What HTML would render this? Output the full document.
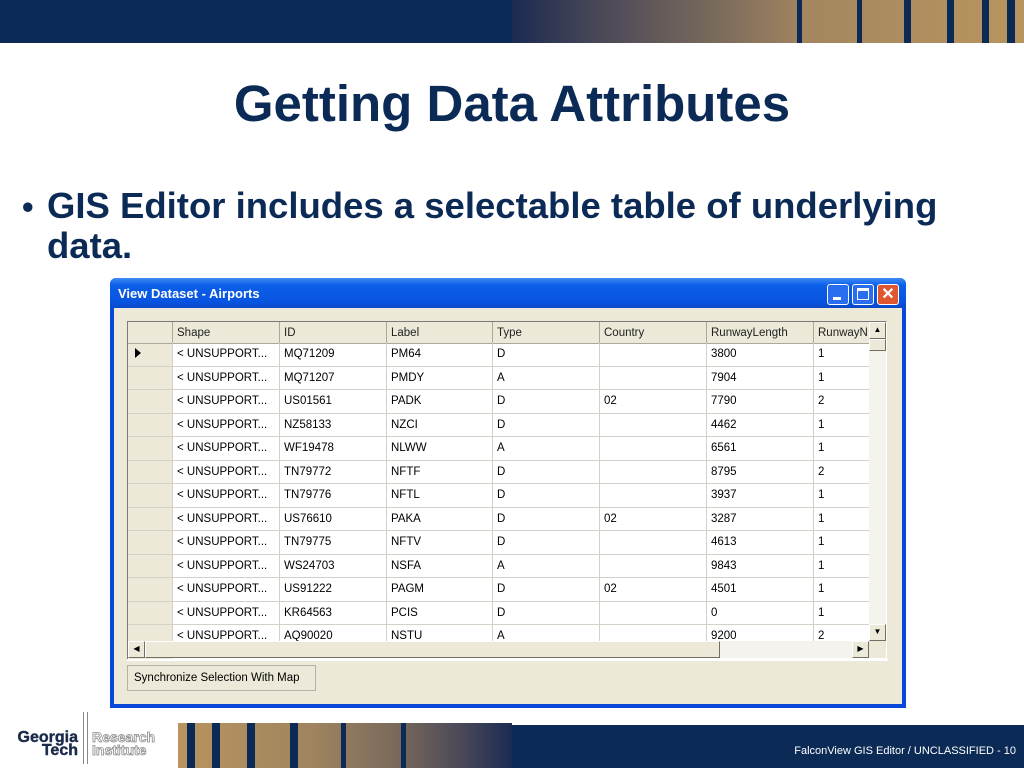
<!DOCTYPE html>
<html><head><meta charset="utf-8"><style>
*{margin:0;padding:0;box-sizing:border-box}
body{width:1024px;height:768px;position:relative;overflow:hidden;background:#fff;font-family:"Liberation Sans",Arial,sans-serif}
.a{position:absolute}
.s{position:absolute;background:#0b2a55}
.cell{position:absolute;font-size:11.5px;color:#000;white-space:nowrap;overflow:hidden;line-height:23px;padding-left:4px}
</style></head><body>
<div class="a" style="left:0;top:0;width:512px;height:43px;background:#0b2a55"></div>
<div class="a" style="left:512px;top:0;width:290px;height:43px;background:linear-gradient(90deg,#1b2b52,#4a4858 30%,#7a6a5c 70%,#a0845f)"></div>
<div class="a" style="left:797px;top:0;width:227px;height:43px;background:linear-gradient(90deg,#a3865f,#b8955f)"></div>
<div class="s" style="left:797px;top:0;width:5px;height:43px"></div>
<div class="s" style="left:857px;top:0;width:5px;height:43px"></div>
<div class="s" style="left:904px;top:0;width:7px;height:43px"></div>
<div class="s" style="left:947px;top:0;width:7px;height:43px"></div>
<div class="s" style="left:982px;top:0;width:7px;height:43px"></div>
<div class="s" style="left:1007px;top:0;width:8px;height:43px"></div>

<div class="a" style="left:0;top:74px;width:1024px;text-align:center;font-size:51px;font-weight:bold;color:#0b2a55;line-height:60px">Getting Data Attributes</div>
<div class="a" style="left:22px;top:187px;font-size:33px;font-weight:bold;color:#0b2a55;line-height:40px">•</div>
<div class="a" style="left:47px;top:186px;width:975px;font-size:36.5px;font-weight:bold;color:#0b2a55;line-height:40px">GIS Editor includes a selectable table of underlying<br>data.</div>

<div class="a" style="left:110px;top:278px;width:796px;height:430px;background:#0a46d8;border-radius:6px 6px 0 0"></div>
<div class="a" style="left:110px;top:278px;width:796px;height:30px;border-radius:6px 6px 0 0;background:linear-gradient(180deg,#3d8cf5,#0b5ee8 25%,#0854e0 80%,#0a48c8)"></div>
<div class="a" style="left:118px;top:286px;font-size:13px;font-weight:bold;color:#fff">View Dataset - Airports</div>
<div class="a" style="left:827px;top:284px;width:22px;height:21px;border:1px solid #fff;border-radius:3px;background:#2a6ef0"><div class="a" style="left:5px;top:12px;width:8px;height:3px;background:#fff"></div></div>
<div class="a" style="left:852px;top:284px;width:22px;height:21px;border:1px solid #fff;border-radius:3px;background:#2a6ef0"><div class="a" style="left:4px;top:3px;width:12px;height:12px;border:1px solid #fff;border-top:3px solid #fff"></div></div>
<div class="a" style="left:877px;top:284px;width:22px;height:21px;border:1px solid #fff;border-radius:3px;background:#e0562f;color:#fff;font-size:16px;font-weight:bold;text-align:center;line-height:19px">✕</div>
<div class="a" style="left:114px;top:308px;width:788px;height:396px;background:#ece9d8"></div>

<div class="a" style="left:127px;top:321px;width:760px;height:339px;border:1px solid #7a7a7a;border-right-color:#fff;border-bottom-color:#fff;background:#fff;overflow:hidden">
<div class="a" style="left:0;top:0;width:45px;height:339px;background:#ece9d8"></div>
<div class="a" style="left:0;top:0;width:760px;height:22px;background:#ece9d8;border-bottom:1px solid #aca899"></div>
</div>
<div id="g"></div>
<div class="a" style="left:869px;top:322px;width:17px;height:319px;background:#f4f3ee"></div>
<div class="a" style="left:869px;top:322px;width:17px;height:17px;background:#ece9d8;border:1px solid #fff;border-right-color:#716f64;border-bottom-color:#716f64;font-size:8px;text-align:center;line-height:14px">▲</div>
<div class="a" style="left:869px;top:339px;width:17px;height:12px;background:#ece9d8;border:1px solid #fff;border-right-color:#716f64;border-bottom-color:#716f64"></div>
<div class="a" style="left:869px;top:624px;width:17px;height:17px;background:#ece9d8;border:1px solid #fff;border-right-color:#716f64;border-bottom-color:#716f64;font-size:8px;text-align:center;line-height:14px">▼</div>
<div class="a" style="left:128px;top:641px;width:741px;height:17px;background:#f4f3ee"></div>
<div class="a" style="left:128px;top:641px;width:17px;height:17px;background:#ece9d8;border:1px solid #fff;border-right-color:#716f64;border-bottom-color:#716f64;font-size:8px;text-align:center;line-height:14px">◀</div>
<div class="a" style="left:145px;top:641px;width:575px;height:17px;background:#ece9d8;border:1px solid #fff;border-right-color:#716f64;border-bottom-color:#716f64"></div>
<div class="a" style="left:852px;top:641px;width:17px;height:17px;background:#ece9d8;border:1px solid #fff;border-right-color:#716f64;border-bottom-color:#716f64;font-size:8px;text-align:center;line-height:14px">▶</div>
<div class="a" style="left:869px;top:641px;width:17px;height:17px;background:#ece9d8"></div>
<div class="a" style="left:127px;top:659px;width:761px;height:2px;background:#fff"></div>

<div class="a" style="left:127px;top:665px;width:189px;height:26px;border:1px solid #b5b2a5;background:#ece9d8;font-size:11.5px;line-height:24px;padding-left:6px">Synchronize Selection With Map</div>

<div class="a" style="left:178px;top:723px;width:334px;height:45px;background:linear-gradient(90deg,#b8955f,#a0845f 40%,#7a6a5c 65%,#4a4858 85%,#1b2b52)"></div>
<div class="a" style="left:512px;top:725px;width:512px;height:43px;background:#0b2a55"></div>
<div class="s" style="left:187px;top:723px;width:8px;height:45px"></div>
<div class="s" style="left:212px;top:723px;width:8px;height:45px"></div>
<div class="s" style="left:247px;top:723px;width:8px;height:45px"></div>
<div class="s" style="left:290px;top:723px;width:8px;height:45px"></div>
<div class="s" style="left:341px;top:723px;width:5px;height:45px"></div>
<div class="s" style="left:401px;top:723px;width:5px;height:45px"></div>
<div class="a" style="right:8px;top:745px;font-size:11px;color:#fff">FalconView GIS Editor / UNCLASSIFIED - 10</div>
<div class="a" style="left:2px;top:731px;font-size:16px;font-weight:bold;color:#1a2a4a;line-height:13px;text-align:right;width:76px;-webkit-text-stroke:0.4px #1a2a4a">Georgia<br>Tech</div>
<div class="a" style="left:83px;top:712px;width:5px;height:52px;border-left:1px solid #888;border-right:1px solid #888"></div>
<div class="a" style="left:92px;top:731px;font-size:14px;font-weight:bold;color:#fff;-webkit-text-stroke:0.8px #8a8a8a;line-height:13px">Research<br>Institute</div>

<script>
var cols=[[172,107,'Shape'],[279,107,'ID'],[386,106,'Label'],[492,107,'Type'],[599,107,'Country'],[706,107,'RunwayLength'],[813,56,'RunwayN']];
var rows=[['MQ71209','PM64','D','','3800','1'],['MQ71207','PMDY','A','','7904','1'],['US01561','PADK','D','02','7790','2'],['NZ58133','NZCI','D','','4462','1'],['WF19478','NLWW','A','','6561','1'],['TN79772','NFTF','D','','8795','2'],['TN79776','NFTL','D','','3937','1'],['US76610','PAKA','D','02','3287','1'],['TN79775','NFTV','D','','4613','1'],['WS24703','NSFA','A','','9843','1'],['US91222','PAGM','D','02','4501','1'],['KR64563','PCIS','D','','0','1'],['AQ90020','NSTU','A','','9200','2']];
var h='';
cols.forEach(function(c){h+='<div class="cell" style="left:'+c[0]+'px;top:322px;width:'+c[1]+'px;height:21px;line-height:22px;color:#222;border-left:1px solid #aca899">'+c[2]+'</div>';});
rows.forEach(function(r,i){var y=343+i*23.5;
 h+='<div class="a" style="left:128px;top:'+(y+22.5)+'px;width:741px;height:1px;background:#d4d0c8"></div>';
 var v=['&lt; UNSUPPORT...'].concat(r);
 cols.forEach(function(c,j){h+='<div class="cell" style="left:'+c[0]+'px;top:'+y+'px;width:'+c[1]+'px;height:'+Math.min(23,641-y)+'px;border-left:1px solid #d4d0c8">'+v[j]+'</div>';});
});
h+='<div class="a" style="left:135px;top:348px;width:0;height:0;border-top:5px solid transparent;border-bottom:5px solid transparent;border-left:6px solid #000"></div>';
document.getElementById('g').innerHTML=h;
</script>
</body></html>
